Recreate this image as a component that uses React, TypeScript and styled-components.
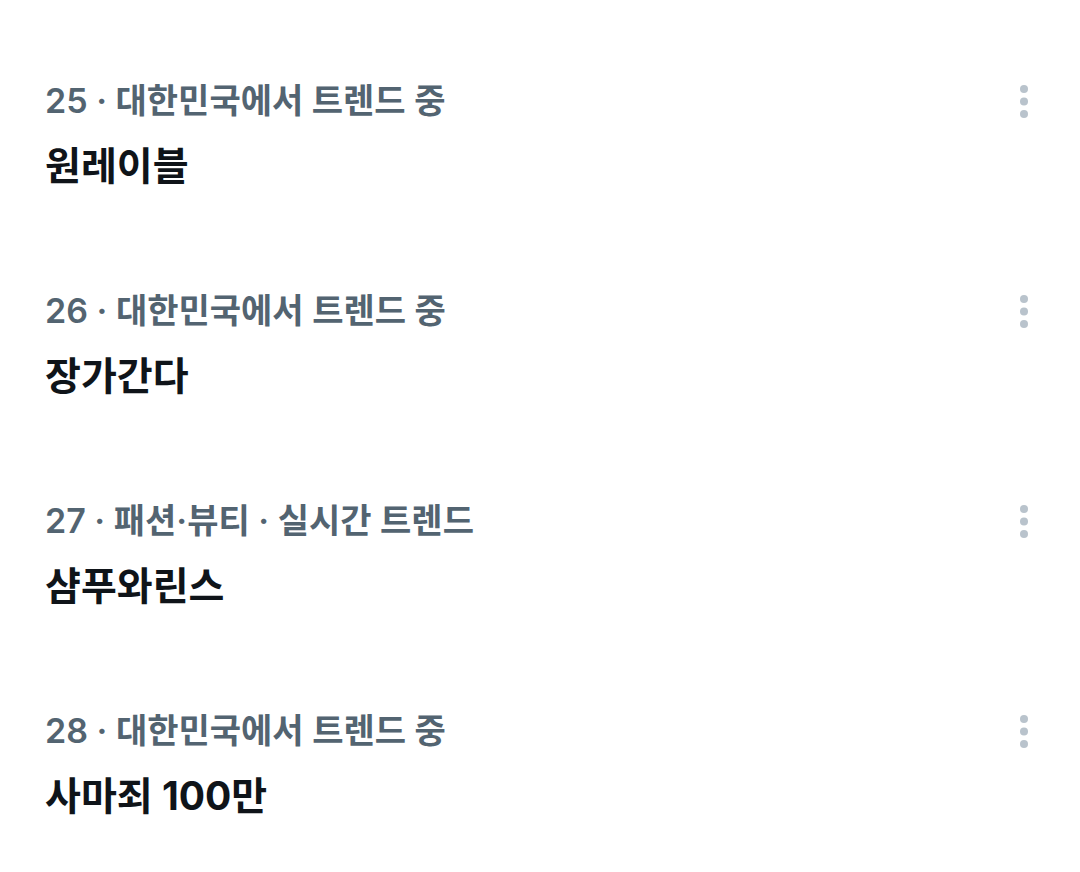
import { FC } from 'react';
import styled, { createGlobalStyle } from 'styled-components';

const GlobalStyle = createGlobalStyle`
    html, body {
        margin: 0;
        padding: 0;
        background: #ffffff;
    }
    body {
        font-family: Inter, "Noto Sans CJK KR", "Noto Sans", sans-serif;
        -webkit-font-smoothing: antialiased;
    }
`;

const List = styled.section`
    display: flex;
    flex-direction: column;
    padding-top: 51px;
    width: 1080px;
`;

const Trend = styled.article`
    display: flex;
    align-items: flex-start;
    justify-content: space-between;
    height: 210px;
    box-sizing: border-box;
    padding: 30px 40px 0 45px;
`;

const Texts = styled.div`
    display: flex;
    flex-direction: column;
`;

const Meta = styled.div`
    font-size: 34px;
    line-height: 40px;
    font-weight: 600;
    color: #536471;
`;

const Name = styled.div`
    margin-top: 20px;
    font-size: 39px;
    line-height: 50px;
    font-weight: 700;
    color: #0f1419;
`;

const MoreButton = styled.button`
    border: none;
    background: none;
    padding: 0;
    margin: 0 4px 0 0;
    width: 24px;
    height: 40px;
    display: flex;
    align-items: center;
    justify-content: center;
    cursor: pointer;
`;

const MoreIcon: FC = () => (
    <svg width="12" height="40" viewBox="0 0 12 40" aria-hidden="true">
        <circle cx="6" cy="8" r="4" fill="#b9c3cc" />
        <circle cx="6" cy="20.5" r="4" fill="#b9c3cc" />
        <circle cx="6" cy="33" r="4" fill="#b9c3cc" />
    </svg>
);

type TrendItem = { meta: string; name: string };

const trends: TrendItem[] = [
    { meta: '25 · 대한민국에서 트렌드 중', name: '원레이블' },
    { meta: '26 · 대한민국에서 트렌드 중', name: '장가간다' },
    { meta: '27 · 패션·뷰티 · 실시간 트렌드', name: '샴푸와린스' },
    { meta: '28 · 대한민국에서 트렌드 중', name: '사마죄 100만' },
];

export default function App() {
    return (
        <>
            <GlobalStyle />
            <List>
                {trends.map((t) => (
                    <Trend key={t.meta}>
                        <Texts>
                            <Meta>{t.meta}</Meta>
                            <Name>{t.name}</Name>
                        </Texts>
                        <MoreButton aria-label="더 보기">
                            <MoreIcon />
                        </MoreButton>
                    </Trend>
                ))}
            </List>
        </>
    );
}
